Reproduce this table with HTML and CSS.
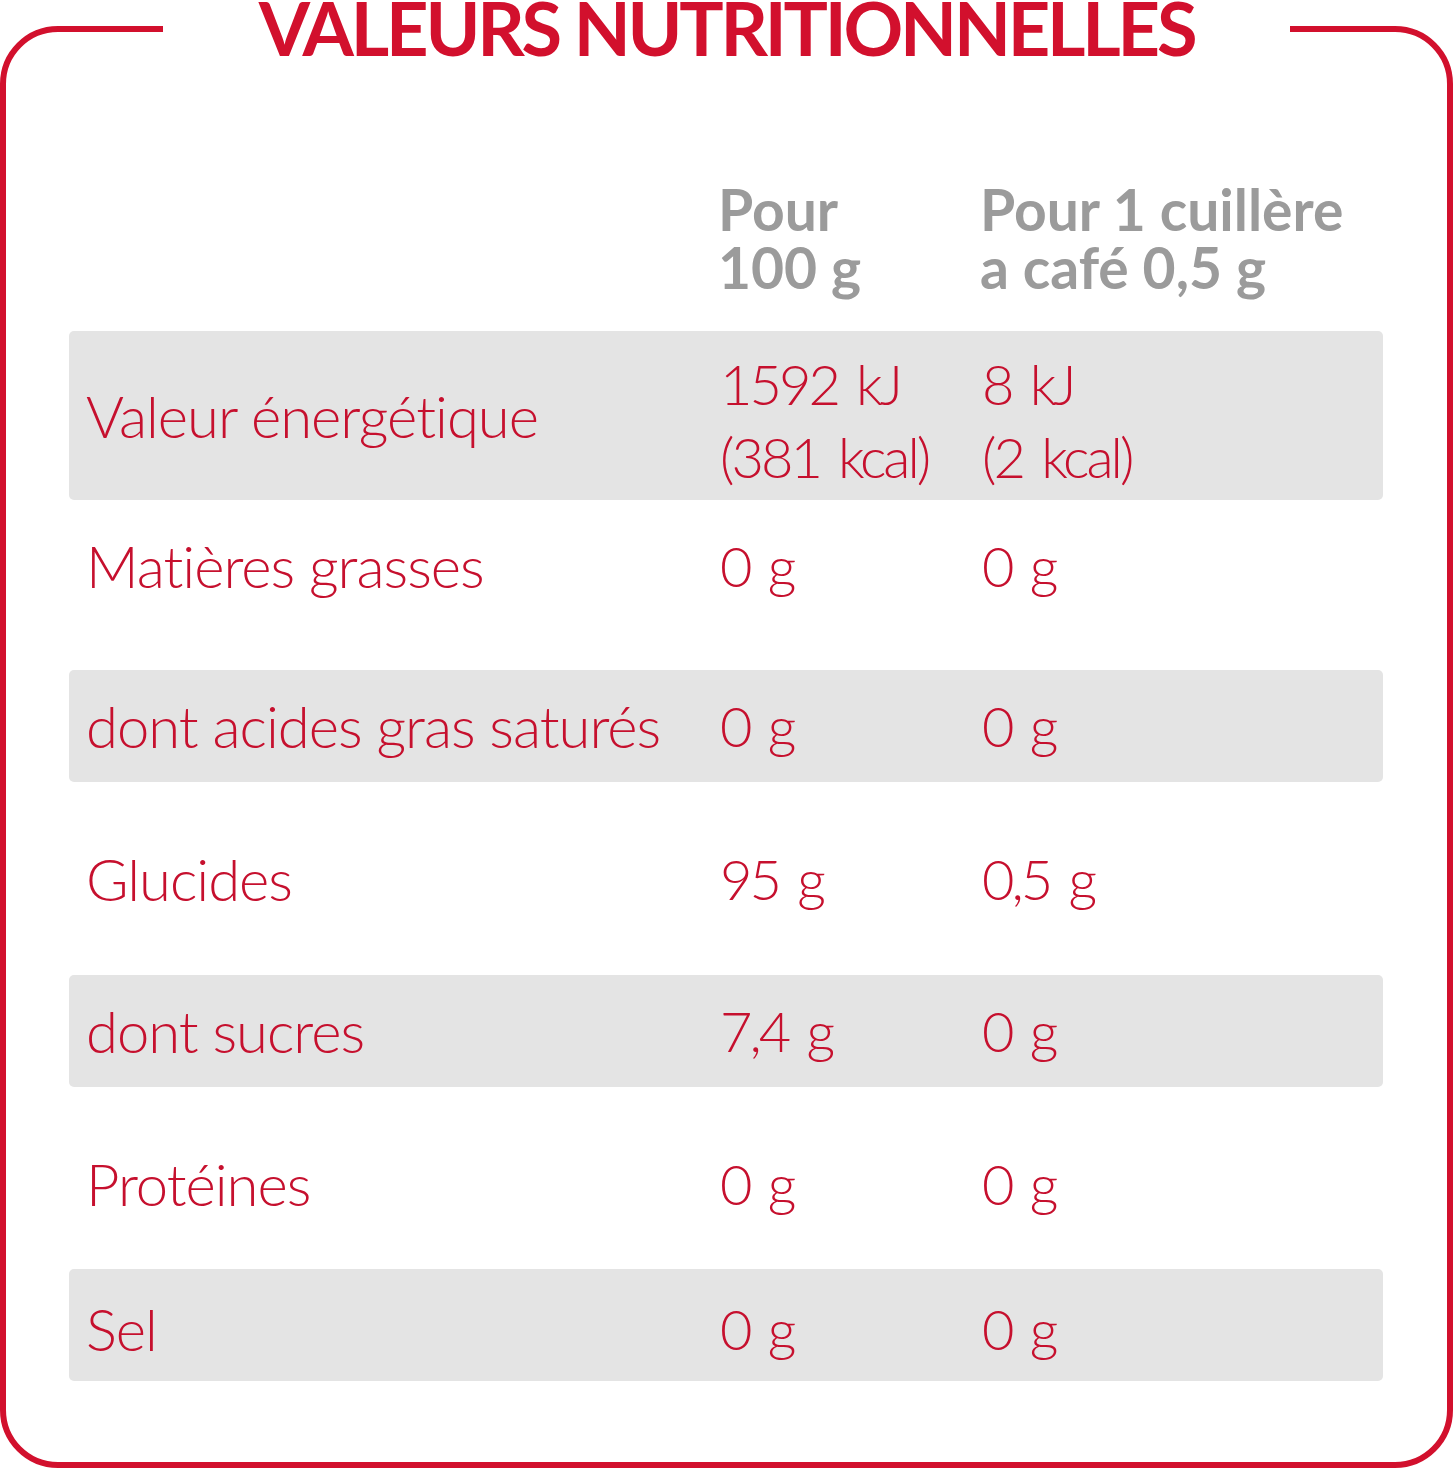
FILE: index.html
```html
<!DOCTYPE html>
<html lang="fr">
<head>
<meta charset="utf-8">
<title>Valeurs nutritionnelles</title>
<link rel="stylesheet" href="styles.css">
</head>
<body>
<div class="page">
  <div class="frame">
    <h1 class="title">VALEURS NUTRITIONNELLES</h1>
    <div class="head">
      <div></div>
      <div class="hcell">Pour<br>100 g</div>
      <div class="hcell">Pour 1 cuillère<br>a café 0,5 g</div>
    </div>
    <div class="row gray r1">
      <div class="label">Valeur énergétique</div>
      <div class="val two">1592 kJ<br>(381 kcal)</div>
      <div class="val two">8 kJ<br>(2 kcal)</div>
    </div>
    <div class="row r2">
      <div class="label">Matières grasses</div>
      <div class="val">0 g</div>
      <div class="val">0 g</div>
    </div>
    <div class="row gray r3">
      <div class="label">dont acides gras saturés</div>
      <div class="val">0 g</div>
      <div class="val">0 g</div>
    </div>
    <div class="row r4">
      <div class="label">Glucides</div>
      <div class="val">95 g</div>
      <div class="val">0,5 g</div>
    </div>
    <div class="row gray r5">
      <div class="label">dont sucres</div>
      <div class="val">7,4 g</div>
      <div class="val">0 g</div>
    </div>
    <div class="row r6">
      <div class="label">Protéines</div>
      <div class="val">0 g</div>
      <div class="val">0 g</div>
    </div>
    <div class="row gray r7">
      <div class="label">Sel</div>
      <div class="val">0 g</div>
      <div class="val">0 g</div>
    </div>
  </div>
</div>
</body>
</html>
```

FILE: styles.css
```css
html, body {
  margin: 0;
  padding: 0;
  background: #ffffff;
}
.page {
  width: 1453px;
  height: 1470px;
  padding-top: 26px;
  box-sizing: border-box;
  overflow: hidden;
}
.frame {
  position: relative;
  box-sizing: border-box;
  width: 1453px;
  height: 1442px;
  border: 6px solid #d2102d;
  border-radius: 58px;
  padding: 0 64px 0 63px;
}
.title {
  position: absolute;
  top: -52px;
  left: 157px;
  width: 1127px;
  margin: 0;
  background: #ffffff;
  text-align: center;
  font-family: Lato, "Open Sans", sans-serif;
  font-weight: 700;
  font-size: 74px;
  line-height: 96px;
  letter-spacing: -3.2px;
  color: #d2102d;
  white-space: nowrap;
}
.head {
  display: grid;
  grid-template-columns: 632px 262px 1fr;
  padding-left: 17px;
  height: 299px;
  box-sizing: border-box;
  padding-top: 148px;
}
.hcell {
  font-family: Lato, "Open Sans", sans-serif;
  font-weight: 700;
  font-size: 57px;
  line-height: 58px;
  color: #9b9b9b;
}
.row {
  display: grid;
  grid-template-columns: 632px 262px 1fr;
  align-items: center;
  padding-left: 17px;
  box-sizing: border-box;
  border-radius: 5px;
  font-family: Lato, "Open Sans", sans-serif;
  font-weight: 300;
  font-size: 58px;
  color: #c6102e;
}
.gray { background: #e4e4e4; }
.label {
  line-height: 70px;
  white-space: nowrap;
  letter-spacing: -1px;
}
.val {
  padding-left: 2px;
  line-height: 70px;
  white-space: nowrap;
  font-size: 56px;
  letter-spacing: -3px;
  word-spacing: 6px;
}
.val.two { line-height: 73px; padding-top: 8px; }
.r1 { height: 169px; }
.r2 { height: 170px; padding-bottom: 38px; }
.r3 { height: 112px; }
.r4 { height: 193px; }
.r5 { height: 112px; }
.r6 { height: 182px; padding-top: 12px; }
.r7 { height: 112px; padding-top: 8px; }
```
